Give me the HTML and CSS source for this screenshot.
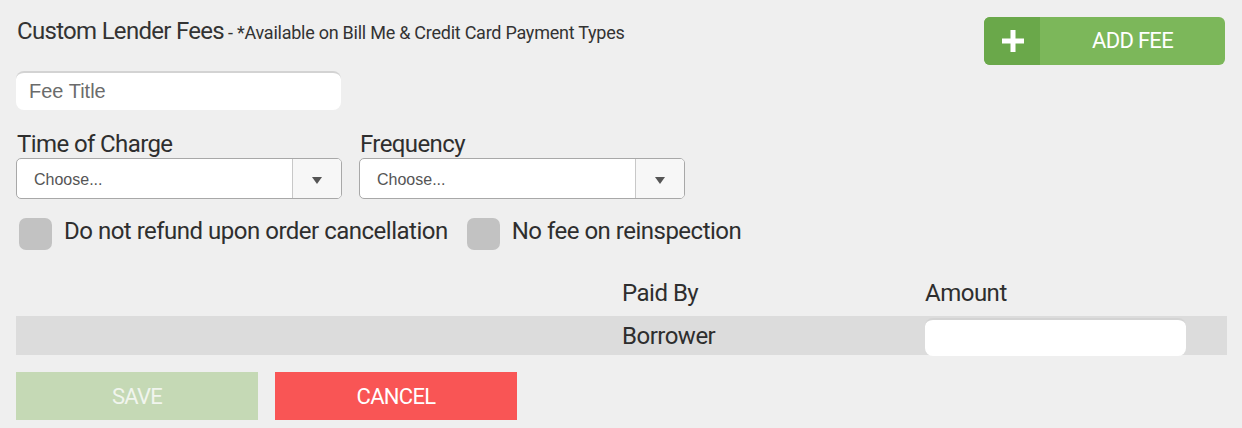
FILE: index.html
```html
<!DOCTYPE html>
<html lang="en">
<head>
<meta charset="utf-8">
<title>Custom Lender Fees</title>
<link rel="stylesheet" href="styles.css">
</head>
<body>
<div class="page">
  <div class="header">
    <div class="title"><span class="title-main">Custom Lender Fees</span> <span class="title-sub">- *Available on Bill Me &amp; Credit Card Payment Types</span></div>
    <button class="add-btn" type="button">
      <span class="add-icon"><svg width="22" height="22" viewBox="0 0 22 22"><rect x="8.5" y="0" width="5" height="22" fill="#fff"/><rect x="0" y="8.5" width="22" height="5" fill="#fff"/></svg></span>
      <span class="add-label">ADD FEE</span>
    </button>
  </div>

  <input class="text-input fee-title" type="text" placeholder="Fee Title">

  <div class="selects">
    <div class="field">
      <div class="label">Time of Charge</div>
      <div class="select">
        <span class="select-value">Choose...</span>
        <span class="select-arrow"><svg width="10" height="7" viewBox="0 0 10 7"><polygon points="0,0 10,0 5,7" fill="#555"/></svg></span>
      </div>
    </div>
    <div class="field">
      <div class="label">Frequency</div>
      <div class="select">
        <span class="select-value">Choose...</span>
        <span class="select-arrow"><svg width="10" height="7" viewBox="0 0 10 7"><polygon points="0,0 10,0 5,7" fill="#555"/></svg></span>
      </div>
    </div>
  </div>

  <div class="checks">
    <label class="check"><span class="box"></span><span class="check-text">Do not refund upon order cancellation</span></label>
    <label class="check"><span class="box"></span><span class="check-text">No fee on reinspection</span></label>
  </div>

  <div class="table">
    <div class="thead">
      <div></div>
      <div class="th">Paid By</div>
      <div class="th">Amount</div>
      <div></div>
    </div>
    <div class="trow">
      <div></div>
      <div class="td">Borrower</div>
      <div class="td td-input"><input class="text-input amount" type="text"></div>
      <div></div>
    </div>
  </div>

  <div class="actions">
    <button class="btn save" type="button">SAVE</button>
    <button class="btn cancel" type="button">CANCEL</button>
  </div>
</div>
</body>
</html>
```

FILE: styles.css
```css
* { box-sizing: border-box; }

html, body {
  margin: 0;
  padding: 0;
  background: #efefef;
}

body {
  font-family: Roboto, "Liberation Sans", sans-serif;
  color: #2e2e2e;
}

.page {
  padding: 17px 15px 0 16px;
  width: 1242px;
}

.header {
  display: flex;
  justify-content: space-between;
  align-items: flex-start;
  height: 48px;
}

.title {
  margin-top: 0;
  line-height: 28px;
  padding-left: 1px;
  white-space: nowrap;
}

.title-main {
  font-size: 24px;
  letter-spacing: -0.7px;
  color: #333;
}

.title-sub {
  font-size: 18px;
  letter-spacing: -0.25px;
  color: #333;
}

.add-btn {
  display: flex;
  width: 241px;
  height: 48px;
  margin-right: 2px;
  padding: 0;
  border: none;
  border-radius: 6px;
  overflow: hidden;
  background: #7cb75a;
  cursor: pointer;
}

.add-icon {
  width: 56px;
  height: 100%;
  background: #6aa84a;
  display: flex;
  align-items: center;
  justify-content: center;
  padding-left: 2px;
}

.add-label {
  flex: 1;
  display: flex;
  align-items: center;
  justify-content: center;
  color: #fff;
  font-family: Roboto, sans-serif;
  font-size: 22px;
  letter-spacing: -0.7px;
  padding-bottom: 1px;
}

.text-input {
  display: block;
  border: none;
  border-top: 2px solid #d3d3d3;
  border-radius: 8px;
  background: #fff;
  outline: none;
  font-family: "Liberation Sans", Arial, sans-serif;
}

.fee-title {
  margin-top: 6px;
  width: 325px;
  height: 39px;
  padding: 0 13px;
  font-size: 20px;
}

.fee-title::placeholder {
  color: #6b6b6b;
  opacity: 1;
}

.selects {
  display: flex;
  gap: 17px;
  margin-top: 20px;
}

.field {
  width: 326px;
}

.label {
  font-size: 24px;
  letter-spacing: -0.6px;
  line-height: 28px;
  padding-left: 1px;
  color: #2e2e2e;
}

.select {
  display: flex;
  height: 41px;
  border: 1px solid #a8a8a8;
  border-radius: 5px;
  background: #fff;
  overflow: hidden;
}

.select-value {
  flex: 1;
  display: flex;
  align-items: center;
  padding-left: 17px;
  padding-top: 2px;
  font-family: "Liberation Sans", Arial, sans-serif;
  font-size: 16px;
  color: #555;
}

.select-arrow {
  width: 49px;
  border-left: 1px solid #c8c8c8;
  background: #f7f7f7;
  display: flex;
  align-items: center;
  justify-content: center;
  padding-top: 3px;
}

.checks {
  display: flex;
  gap: 19px;
  margin-top: 19px;
  padding-left: 3px;
}

.check {
  display: flex;
  align-items: flex-start;
  gap: 12px;
}

.box {
  width: 33px;
  height: 32px;
  border-radius: 7px;
  background: #c2c2c2;
}

.check-text {
  font-size: 24px;
  letter-spacing: -0.5px;
  line-height: 24px;
  padding-top: 1px;
  color: #2e2e2e;
}

.table {
  margin-top: 29px;
  width: 1211px;
}

.thead, .trow {
  display: grid;
  grid-template-columns: 606px 303px 261px 1fr;
}

.thead {
  height: 37px;
}

.th {
  font-size: 24px;
  letter-spacing: -0.5px;
  line-height: 28px;
  color: #2e2e2e;
}

.trow {
  height: 39px;
  background: #dcdcdc;
  align-items: center;
}

.td {
  font-size: 24px;
  letter-spacing: -0.5px;
  line-height: 28px;
  color: #2e2e2e;
}

.td-input {
  align-self: start;
}

.amount {
  width: 261px;
  height: 38px;
  margin-top: 2px;
}

.actions {
  display: flex;
  gap: 17px;
  margin-top: 17px;
}

.btn {
  width: 242px;
  height: 48px;
  border: none;
  border-radius: 0;
  font-family: Roboto, sans-serif;
  font-size: 22px;
  letter-spacing: -0.7px;
  color: #fff;
  cursor: pointer;
  padding: 0;
}

.save {
  background: #c5d9b5;
  color: #f1f5ee;
}

.cancel {
  background: #f95555;
}
```
